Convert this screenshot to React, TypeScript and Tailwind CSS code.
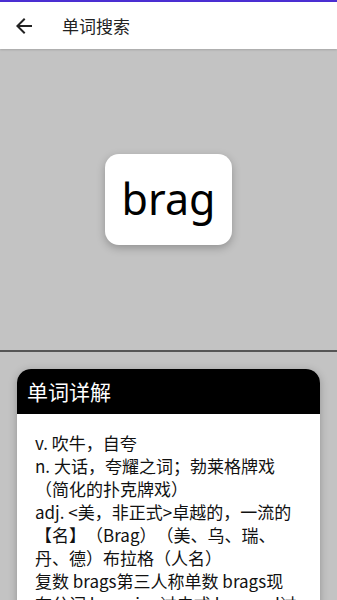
import React from "react";

const CJK = '"Noto Sans CJK SC", "Noto Sans", sans-serif';

const defs = [
  "v. 吹牛，自夸",
  "n. 大话，夸耀之词；勃莱格牌戏（简化的扑克牌戏）",
  "adj. <美，非正式>卓越的，一流的",
  "【名】（Brag）（美、乌、瑞、丹、德）布拉格（人名）",
  "复数 brags第三人称单数 brags现在分词 bragging过去式 bragged过去分词 bragged",
];

export default function App() {
  return (
    <div className="flex h-[600px] w-[337px] flex-col overflow-hidden bg-[#c3c3c3]" style={{ fontFamily: CJK }}>
      {/* status accent */}
      <div className="h-[2px] shrink-0 bg-[#4b2fd3]" />

      {/* app bar */}
      <div className="z-10 flex h-[47px] shrink-0 items-center bg-white shadow-[0_1px_2px_rgba(0,0,0,0.15)]">
        <svg viewBox="0 0 24 24" className="ml-[12px] h-6 w-6 fill-[#222]">
          <path d="M20 11H7.83l5.59-5.59L12 4l-8 8 8 8 1.41-1.41L7.83 13H20v-2z" />
        </svg>
        <span className="ml-[26px] text-[17px] text-[#222]">单词搜索</span>
      </div>

      {/* word panel */}
      <div className="flex h-[301px] shrink-0 items-center justify-center">
        <div className="flex h-[91px] w-[127px] items-center justify-center rounded-[14px] bg-white shadow-[0_3px_8px_rgba(0,0,0,0.25)]">
          <span className="pb-[2px] text-[43px] leading-none text-black" style={{ fontFamily: '"Noto Sans", sans-serif' }}>
            brag
          </span>
        </div>
      </div>

      <div className="h-[2px] shrink-0 bg-[#555]" />

      {/* detail card */}
      <div className="px-[17px] pt-[17px]">
        <div className="overflow-hidden rounded-t-[14px] bg-white shadow-[0_2px_8px_rgba(0,0,0,0.25)]">
          <div className="flex h-[45px] items-center bg-black px-[10px] text-[21px] text-white">单词详解</div>
          <div className="pb-6 pl-[18px] pr-[22px] pt-[17px] text-[17px] leading-[23px] text-[#111] [text-spacing-trim:space-all]">
            {defs.map((d) => (
              <div key={d}>{d}</div>
            ))}
          </div>
        </div>
      </div>
    </div>
  );
}
